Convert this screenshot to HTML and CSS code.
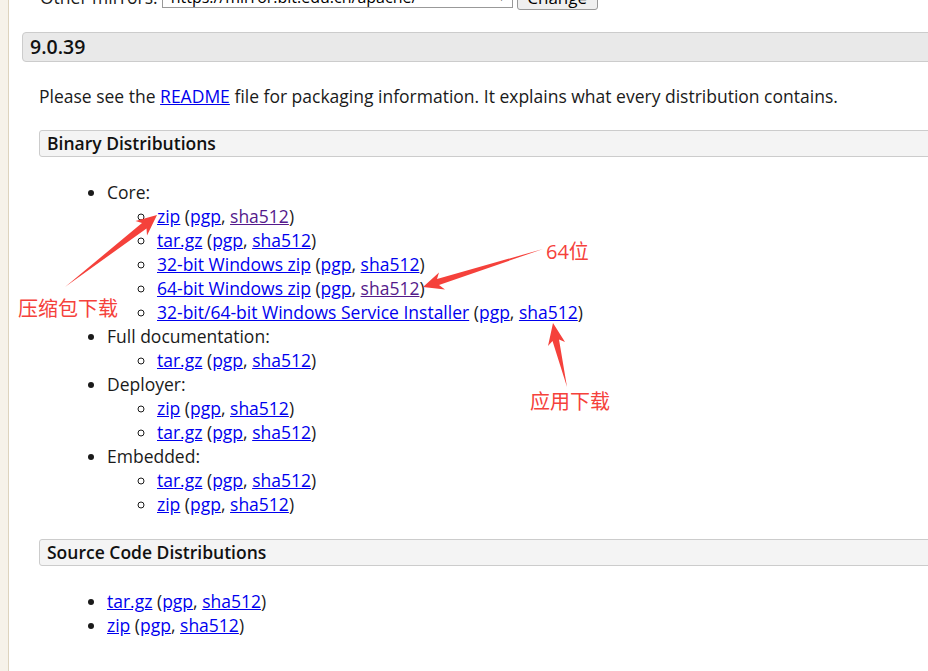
FILE: index.html
```html
<!DOCTYPE html>
<html>
<head>
  <meta charset="UTF-8">
  <title>Tomcat 9 Downloads</title>
  <link rel="stylesheet" href="styles.css">
</head>
<body>
<div class="page">
  <form class="mirrors">
    <span>Other mirrors:</span>
    <span class="select">https://mirror.bit.edu.cn/apache/<span class="caret">&#9662;</span></span>
    <button type="button">Change</button>
  </form>

  <h3 class="version">9.0.39</h3>
  <div class="section">
    <p>Please see the <a href="#">README</a> file for packaging information. It explains what every distribution contains.</p>

    <h4 class="dist">Binary Distributions</h4>
    <ul>
      <li>Core:
        <ul>
          <li><a href="#">zip</a> (<a href="#">pgp</a>, <a href="#" class="seen">sha512</a>)</li>
          <li><a href="#">tar.gz</a> (<a href="#">pgp</a>, <a href="#">sha512</a>)</li>
          <li><a href="#">32-bit Windows zip</a> (<a href="#">pgp</a>, <a href="#">sha512</a>)</li>
          <li><a href="#">64-bit Windows zip</a> (<a href="#">pgp</a>, <a href="#" class="seen">sha512</a>)</li>
          <li><a href="#">32-bit/64-bit Windows Service Installer</a> (<a href="#">pgp</a>, <a href="#">sha512</a>)</li>
        </ul>
      </li>
      <li>Full documentation:
        <ul>
          <li><a href="#">tar.gz</a> (<a href="#">pgp</a>, <a href="#">sha512</a>)</li>
        </ul>
      </li>
      <li>Deployer:
        <ul>
          <li><a href="#">zip</a> (<a href="#">pgp</a>, <a href="#">sha512</a>)</li>
          <li><a href="#">tar.gz</a> (<a href="#">pgp</a>, <a href="#">sha512</a>)</li>
        </ul>
      </li>
      <li>Embedded:
        <ul>
          <li><a href="#">tar.gz</a> (<a href="#">pgp</a>, <a href="#">sha512</a>)</li>
          <li><a href="#">zip</a> (<a href="#">pgp</a>, <a href="#">sha512</a>)</li>
        </ul>
      </li>
    </ul>

    <h4 class="dist">Source Code Distributions</h4>
    <ul>
      <li><a href="#">tar.gz</a> (<a href="#">pgp</a>, <a href="#">sha512</a>)</li>
      <li><a href="#">zip</a> (<a href="#">pgp</a>, <a href="#">sha512</a>)</li>
    </ul>
  </div>
</div>

<!-- screenshot markup drawn over the page -->
<div class="annot">
  <svg width="928" height="671" viewBox="0 0 928 671">
    <polygon points="65,287 142,223 135.5,221 157,215 147,235.5 146.5,228.5"/>
    <polygon points="543,249 437,279 439,272.5 423,287 445,289.5 439,285"/>
    <polygon points="567,387 552.5,341 548,346 553,323 565,342 559,339.5"/>
  </svg>
  <span class="note note-zip">压缩包下载</span>
  <span class="note note-64">64位</span>
  <span class="note note-app">应用下载</span>
</div>
</body>
</html>
```

FILE: styles.css
```css
body {
  margin: 0;
  background: #f6f2e9;
  font-family: "Open Sans", "Noto Sans CJK SC", sans-serif;
  font-size: 17.5px;
  color: #1a1a1a;
  overflow: hidden;
}

.page {
  margin-left: 8px;
  border-left: 1px solid #ddd3bd;
  background: #fff;
  min-height: 720px;
  padding-left: 13px;
}

.mirrors {
  display: flex;
  align-items: center;
  margin: -16px 0 22px;
  padding-left: 18px;
  height: 26px;
}

.select {
  display: inline-block;
  position: relative;
  width: 341px;
  height: 20px;
  line-height: 20px;
  margin-left: 4px;
  padding-left: 8px;
  border: 1px solid #999;
  font-size: 16px;
  color: #000;
}

.caret {
  position: absolute;
  right: 8px;
  top: 0;
  font-size: 10px;
}

button {
  margin-left: 4px;
  width: 81px;
  height: 26px;
  border: 1px solid #999;
  border-radius: 3px;
  background: #efefef;
  font-family: inherit;
  font-size: 17px;
}

.version {
  margin: 0 -20px 22px 0;
  padding: 0 7px;
  height: 28px;
  line-height: 28px;
  background: #e9e9e9;
  border: 1px solid #ccc;
  border-radius: 4px;
  font-size: 19.5px;
  font-weight: 600;
  color: #111;
}

.section {
  padding-left: 17px;
}

p {
  margin: 0 0 22px;
  line-height: 24px;
}

.dist {
  margin: 0 -20px 23px 0;
  padding: 0 7px;
  height: 25px;
  line-height: 25px;
  background: #f4f4f4;
  border: 1px solid #ccc;
  border-radius: 3px;
  font-size: 17.5px;
  font-weight: 600;
  color: #111;
}

ul {
  margin: 0 0 23px;
  padding-left: 68px;
  line-height: 24px;
}

ul ul {
  margin: 0;
  padding-left: 50px;
  list-style: circle;
}

a {
  color: #0000ee;
}

a.seen {
  color: #551a8b;
}

.annot {
  position: absolute;
  left: 0;
  top: 0;
  width: 928px;
  height: 671px;
  pointer-events: none;
}

.annot svg {
  position: absolute;
  left: 0;
  top: 0;
}

.annot polygon {
  fill: #f5413b;
}

.note {
  position: absolute;
  font-size: 20px;
  line-height: 20px;
  color: #f5413b;
  white-space: nowrap;
}

.note-zip { left: 18px; top: 299px; }
.note-64 { left: 546px; top: 242px; }
.note-app { left: 530px; top: 392px; }
```
